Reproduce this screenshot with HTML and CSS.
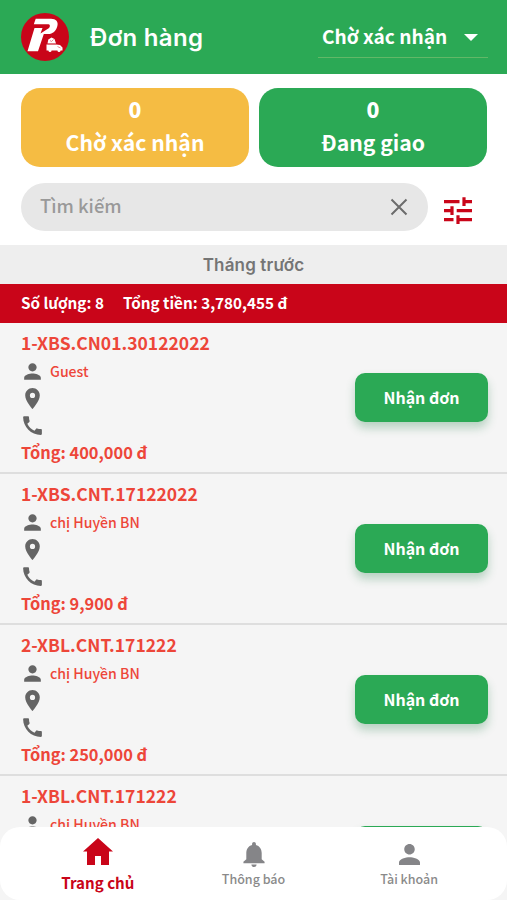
FILE: index.html
```html
<!DOCTYPE html>
<html lang="vi">
<head>
<meta charset="utf-8">
<meta name="viewport" content="width=device-width, initial-scale=1">
<title>Đơn hàng</title>
<link rel="stylesheet" href="styles.css">
</head>
<body>
<svg width="0" height="0" class="defs">
  <symbol id="person" viewBox="0 0 24 24"><path d="M12 12c2.210 0 4-1.790 4-4s-1.790-4-4-4-4 1.790-4 4 1.790 4 4 4zm0 2c-2.670 0-8 1.340-8 4v2h16v-2c0-2.660-5.330-4-8-4z"/></symbol>
  <symbol id="pin" viewBox="0 0 24 24"><path d="M12 2C8.130 2 5 5.130 5 9c0 5.250 7 13 7 13s7-7.750 7-13c0-3.870-3.130-7-7-7zm0 9.500a2.500 2.500 0 0 1 0-5 2.500 2.500 0 0 1 0 5z"/></symbol>
  <symbol id="phone" viewBox="0 0 24 24"><path d="M20.010 15.380c-1.230 0-2.420-.200-3.530-.560a.977.977 0 0 0-1.010.240l-1.570 1.970c-2.830-1.350-5.480-3.900-6.890-6.830l1.950-1.660c.270-.280.350-.670.240-1.020-.370-1.110-.560-2.300-.560-3.530 0-.540-.450-.990-.990-.990H4.190C3.650 3 3 3.240 3 3.990 3 13.280 10.730 21 20.010 21c.710 0 .990-.630.990-1.180v-3.450c0-.540-.450-.990-.990-.990z"/></symbol>
</svg>
<div class="app">
  <header class="topbar">
    <svg class="logo" viewBox="0 0 48 48">
      <circle cx="24" cy="24" r="24" fill="#c90519"/>
      <path d="M14.700 5.700H30c5 0 7.700 3 6.300 7.500-1.300 4.800-4.300 7.800-9.300 7.800h-4.200L17 38.300H6.500L13.500 15h8l-2 5.500 7-4.500c2.500-.5 3.300-4.500 1-4.700H12.800z" fill="#fff"/>
      <path d="M25.500 31.500H35l4 .5 2.500 2.500v3h-16zM26.500 30.500l.8-4 3.200-2 3 1.500 1.500 4.500z" fill="#fff"/>
      <circle cx="29" cy="37.500" r="1.500" fill="#fff"/><circle cx="38" cy="37.500" r="1.500" fill="#fff"/>
      <path d="M27 31h8M36.500 33.500l3 1.500M29 27.500l1.500 1 2-2" stroke="#d85b66" stroke-width=".7" fill="none"/>
    </svg>
    <h1 class="page-title">Đơn hàng</h1>
    <div class="select"><span>Chờ xác nhận</span><svg viewBox="0 0 14 7"><path d="M0 0h14L7 7z" fill="#fff"/></svg></div>
  </header>
  <section class="stats">
    <div class="stat stat-wait"><b>0</b><span>Chờ xác nhận</span></div>
    <div class="stat stat-ship"><b>0</b><span>Đang giao</span></div>
  </section>
  <section class="search-row">
    <div class="search"><span>Tìm kiếm</span><svg viewBox="0 0 18 18"><path d="M1.500 1.500l15 15M16.500 1.500l-15 15" stroke="#6c6c6c" stroke-width="2" fill="none"/></svg></div>
    <svg class="filter" viewBox="0 0 28 28"><path d="M0 4.700h15.500M20 4.700h8M20 .3V9M0 13.700h8M8 9.300V18M12.700 13.700H28M0 22.700h9.500M14 22.700h14M14 18.300V27" stroke="#c90519" stroke-width="3.200" fill="none"/></svg>
  </section>
  <div class="month">Tháng trước</div>
  <div class="summary"><span>Số lượng: 8</span><span>Tổng tiền: 3,780,455 đ</span></div>
  <main class="orders">
    <article class="order">
      <div class="info"><h2>1-XBS.CN01.30122022</h2>
        <div class="line"><svg><use href="#person"/></svg><span>Guest</span></div>
        <div class="line"><svg><use href="#pin"/></svg></div>
        <div class="line"><svg><use href="#phone"/></svg></div>
        <p>Tổng: 400,000 đ</p></div>
      <button>Nhận đơn</button>
    </article>
    <article class="order">
      <div class="info"><h2>1-XBS.CNT.17122022</h2>
        <div class="line"><svg><use href="#person"/></svg><span>chị Huyền BN</span></div>
        <div class="line"><svg><use href="#pin"/></svg></div>
        <div class="line"><svg><use href="#phone"/></svg></div>
        <p>Tổng: 9,900 đ</p></div>
      <button>Nhận đơn</button>
    </article>
    <article class="order">
      <div class="info"><h2>2-XBL.CNT.171222</h2>
        <div class="line"><svg><use href="#person"/></svg><span>chị Huyền BN</span></div>
        <div class="line"><svg><use href="#pin"/></svg></div>
        <div class="line"><svg><use href="#phone"/></svg></div>
        <p>Tổng: 250,000 đ</p></div>
      <button>Nhận đơn</button>
    </article>
    <article class="order">
      <div class="info"><h2>1-XBL.CNT.171222</h2>
        <div class="line"><svg><use href="#person"/></svg><span>chị Huyền BN</span></div></div>
      <button></button>
    </article>
  </main>
  <nav class="tabs">
    <div class="tab active"><svg viewBox="0 0 30 27"><path d="M15 0L0 13.500h4V27h8v-9h6v9h8V13.500h4z"/></svg><span>Trang chủ</span></div>
    <div class="tab"><svg class="bell" viewBox="0 0 22 26"><path d="M11 26c1.500 0 2.700-1.200 2.700-2.700H8.300C8.300 24.800 9.500 26 11 26zM19 18v-6.500c0-4.100-2.200-7.500-6-8.400V2c0-1.100-.9-2-2-2S9 .9 9 2v1.100c-3.800.9-6 4.300-6 8.400V18L0 20.500V22h22v-1.500z"/></svg><span>Thông báo</span></div>
    <div class="tab"><svg class="user" viewBox="4 4 16 16"><path d="M12 12c2.210 0 4-1.790 4-4s-1.790-4-4-4-4 1.790-4 4 1.790 4 4 4zm0 2c-2.670 0-8 1.340-8 4v2h16v-2c0-2.660-5.330-4-8-4z"/></svg><span>Tài khoản</span></div>
  </nav>
</div>
</body>
</html>
```
FILE: styles.css
```css
* { box-sizing: border-box; margin: 0; padding: 0; }
body { font-family: "Noto Sans CJK SC", "Noto Sans", sans-serif; font-weight: 500; background: #fff; }
.defs { position: absolute; }
.app { position: relative; width: 507px; height: 900px; overflow: hidden; }
.topbar { height: 74px; background: #2ba955; display: flex; align-items: center; padding: 0 19px 0 21px; color: #fff; }
.logo { width: 48px; height: 48px; }
.page-title { font: 600 24px/30px Inter, sans-serif; letter-spacing: .3px; margin-left: 21px; margin-top: 2px; flex: 1; white-space: nowrap; }
.select { width: 170px; height: 42px; margin-top: 0; padding: 0 10px 0 4px; border-bottom: 1px solid #62b867; display: flex; align-items: center; justify-content: space-between; font-size: 19.1px; font-weight: 700; line-height: 38px; white-space: nowrap; }
.select span { margin-top: -2px; }
.select svg { width: 14px; height: 7px; margin-top: 2px; }
.stats { display: flex; gap: 10px; padding: 14px 20px 0 21px; height: 94px; }
.stat { flex: 1; height: 79px; border-radius: 19px; color: #fff; text-align: center; display: flex; flex-direction: column; padding-top: 4px; font-size: 21.2px; font-weight: 700; line-height: 34px; }
.stat b { font-size: 21.2px; line-height: 34px; }
.stat span { margin-top: -1px; }
.stat-wait { background: #f5bc43; }
.stat-ship { background: #2ba955; }
.search-row { height: 78px; padding: 15px 35px 0 21px; display: flex; justify-content: space-between; }
.search { width: 407px; height: 48px; border-radius: 24px; background: #e7e7e7; color: #999; display: flex; justify-content: space-between; align-items: center; padding: 0 20px 0 19px; font-size: 18.4px; font-weight: 500; }
.search span { margin-top: -4px; }
.search svg { width: 18px; height: 18px; }
.filter { width: 28px; height: 28px; margin-top: 14px; }
.month { height: 39px; margin-top: -1px; background: #eee; color: #757575; text-align: center; font: 600 17px/40px Inter, sans-serif; letter-spacing: .15px; }
.summary { height: 39px; background: #c90519; color: #fff; padding-left: 21px; display: flex; gap: 19px; font-size: 15.25px; font-weight: 700; line-height: 37px; }
.orders { background: #f5f5f5; height: 577px; }
.order { height: 151px; border-bottom: 2px solid #dedede; padding: 4px 19px 0 20px; display: flex; justify-content: space-between; }
.order h2 { margin-left: 1px; font-size: 17.5px; line-height: 31px; font-weight: 700; color: #ed4639; height: 31px; white-space: nowrap; }
.line { height: 27px; display: flex; align-items: center; gap: 5px; font-size: 14.1px; line-height: 26px; color: #ed4639; }
.line span { margin-top: -1px; }
.line svg { width: 25px; height: 25px; fill: #656565; }
.order p { margin-left: 1px; font-size: 16.4px; line-height: 27px; font-weight: 700; color: #ed4639; }
.order button { width: 133px; height: 49px; margin-top: 46px; padding-bottom: 2px; border: 0; border-radius: 10px; background: #2ba955; color: #fff; font: 700 16px/46px "Noto Sans CJK SC", sans-serif; box-shadow: 0 6px 10px rgba(43, 130, 75, .3); }
.tabs { position: absolute; left: 0; right: 0; bottom: 0; height: 73px; border-radius: 20px; background: #fff; display: flex; padding: 0 20px; }
.tab { flex: 1; display: flex; flex-direction: column; align-items: center; color: #8a8a8a; fill: #858588; font-size: 12.5px; line-height: 20px; }
.tab svg { width: 30px; height: 27px; margin-top: 11px; }
.tab .bell { width: 22px; height: 25px; margin-top: 15px; }
.tab .user { width: 21px; height: 21px; margin-top: 17px; }
.tab span { margin-top: 2px; }
.tab .user + span { margin-top: 4px; }
.active { color: #c90519; fill: #c90519; font-size: 15.1px; font-weight: 700; line-height: 24px; }
.active span { margin-top: 5px; }
```
